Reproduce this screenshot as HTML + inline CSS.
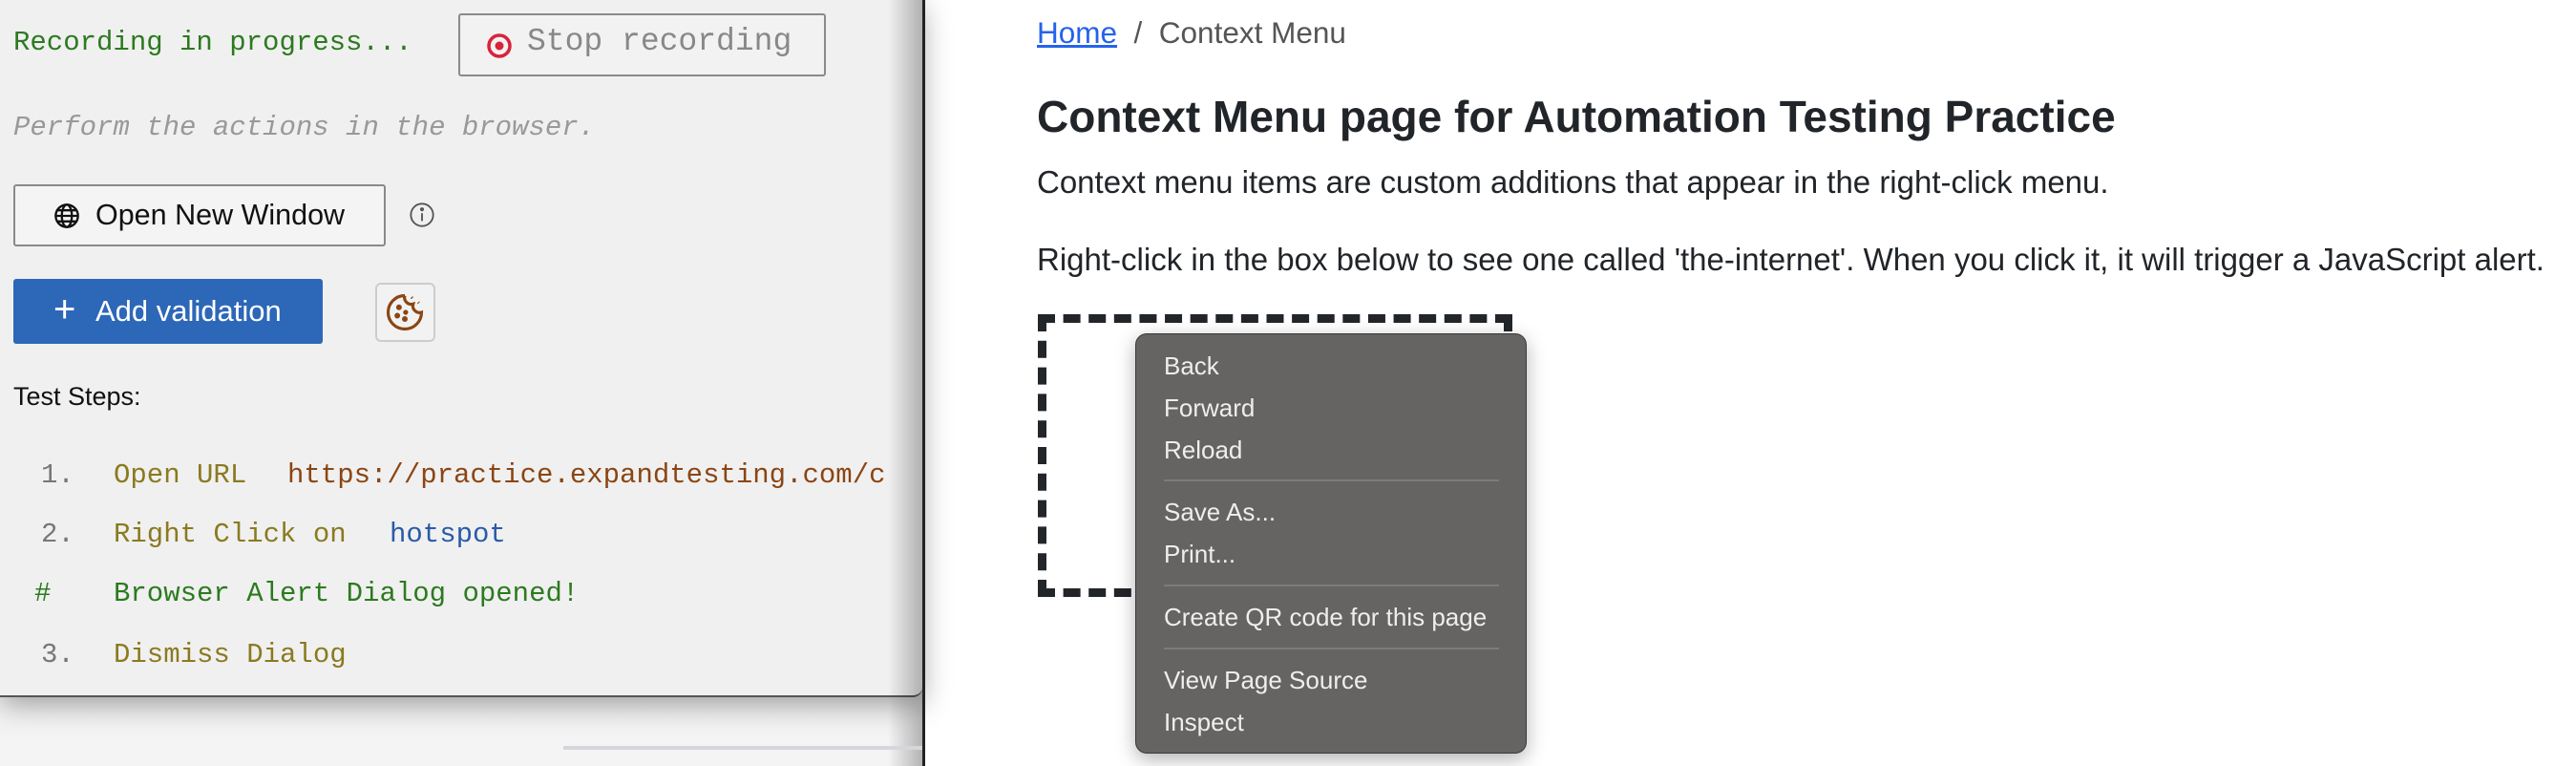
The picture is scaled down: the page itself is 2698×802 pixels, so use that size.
<!DOCTYPE html>
<html><head><meta charset="utf-8"><style>
*{margin:0;padding:0;box-sizing:border-box}
body{width:2698px;height:802px;overflow:hidden;background:#fff;position:relative;font-family:"Liberation Sans",sans-serif}
.abs{position:absolute;white-space:nowrap}
.left{position:absolute;left:0;top:0;width:968px;height:802px;background:linear-gradient(#e8e8e8,#f4f4f4)}
.panel{position:absolute;left:0;top:0;width:966px;height:730px;background:#f0f0f0;border-bottom:2px solid #555;border-bottom-right-radius:10px;box-shadow:0 8px 30px rgba(0,0,0,.35)}
.edge{position:absolute;left:930px;top:0;width:38px;height:802px;background:linear-gradient(90deg,rgba(0,0,0,0),rgba(0,0,0,.28));}
.vline{position:absolute;left:966px;top:0;width:3px;height:802px;background:#222}
.mono{font-family:"Liberation Mono",monospace;font-size:29px}
.btn{position:absolute;border:2px solid #8a8a8a;background:#f2f2f2}
.menu .it{position:absolute;left:29px;color:#eeeeee;font-size:26px}
.sep{position:absolute;left:29px;width:351px;height:2px;background:#7d7c7a}
</style></head><body>
<div class="left"></div>
<div class="panel">
 <div class="abs mono" style="left:14px;top:28px;color:#2c7a1f">Recording in progress...</div>
 <div class="btn" style="left:480px;top:14px;width:385px;height:66px;border-radius:3px"></div>
 <svg class="abs" style="left:508px;top:33px" width="30" height="30" viewBox="0 0 30 30"><circle cx="15" cy="15" r="11" fill="none" stroke="#d9233a" stroke-width="3.5"/><circle cx="15" cy="15" r="4.5" fill="#d9233a"/></svg>
 <div class="abs mono" style="left:552px;top:25px;color:#888;font-size:33px">Stop recording</div>
 <div class="abs mono" style="left:14px;top:117px;color:#999;font-style:italic;font-size:29px">Perform the actions in the browser.</div>
 <div class="btn" style="left:14px;top:193px;width:390px;height:65px;border-radius:3px;background:#f4f4f4"></div>
 <svg class="abs" style="left:56px;top:212px" width="28" height="28" viewBox="0 0 24 24" fill="none" stroke="#111" stroke-width="2"><circle cx="12" cy="12" r="10"/><ellipse cx="12" cy="12" rx="4.5" ry="10"/><path d="M2 12h20M4 7h16M4 17h16"/></svg>
 <div class="abs" style="left:100px;top:208px;font-size:30.5px;color:#111">Open New Window</div>
 <svg class="abs" style="left:428px;top:211px" width="28" height="28" viewBox="0 0 24 24" fill="none" stroke="#555" stroke-width="1.6"><circle cx="12" cy="12" r="10"/><path d="M12 10.5v7"/><circle cx="12" cy="7" r="1" fill="#555"/></svg>
 <div class="abs" style="left:14px;top:292px;width:324px;height:68px;background:#2d67b8;border-radius:3px"></div>
 <div class="abs" style="left:56px;top:302px;font-size:40px;color:#fff;font-weight:300">+</div>
 <div class="abs" style="left:100px;top:308px;font-size:31px;color:#fff">Add validation</div>
 <div class="abs" style="left:393px;top:296px;width:63px;height:62px;border:2px solid #ccc;border-radius:6px;background:#f2f2f2"></div>
 <svg class="abs" style="left:403px;top:306px" width="42" height="42" viewBox="0 0 24 24" fill="none" stroke="#8b4513" stroke-width="1.8"><path d="M12 2a10 10 0 1 0 10 10 4 4 0 0 1-5-5 4 4 0 0 1-5-5"/><circle cx="8.5" cy="9" r=".8" fill="#8b4513"/><circle cx="7.5" cy="14" r=".8" fill="#8b4513"/><circle cx="12" cy="16" r=".8" fill="#8b4513"/><circle cx="12.5" cy="12" r=".6" fill="#8b4513"/><path d="M16 3l.5.5M20 6l.4.4"/></svg>
 <div class="abs" style="left:14px;top:400px;font-size:27px;color:#111">Test Steps:</div>
 <div class="abs mono" style="left:43px;top:481px;color:#777">1.</div>
 <div class="abs mono" style="left:119px;top:481px;color:#8a7a20">Open URL</div>
 <div class="abs mono" style="left:301px;top:481px;color:#8b4513">https://practice.expandtesting.com/c</div>
 <div class="abs mono" style="left:43px;top:543px;color:#777">2.</div>
 <div class="abs mono" style="left:119px;top:543px;color:#8a7a20">Right Click on</div>
 <div class="abs mono" style="left:408px;top:543px;color:#2a5aa8">hotspot</div>
 <div class="abs mono" style="left:36px;top:605px;color:#2c7a1f">#</div>
 <div class="abs mono" style="left:119px;top:605px;color:#2c7a1f">Browser Alert Dialog opened!</div>
 <div class="abs mono" style="left:43px;top:669px;color:#777">3.</div>
 <div class="abs mono" style="left:119px;top:669px;color:#8a7a20">Dismiss Dialog</div>
</div>
<div class="edge"></div>
<div class="abs" style="left:590px;top:781px;width:376px;height:4px;background:#d4d6da"></div>
<div class="vline"></div>

<div class="abs" style="left:1086px;top:16px;font-size:31.5px;color:#555"><span style="color:#2563eb;text-decoration:underline">Home</span>&nbsp; / &nbsp;Context Menu</div>
<div class="abs" style="left:1086px;top:95px;font-size:46px;color:#212529;font-weight:bold">Context Menu page for Automation Testing Practice</div>
<div class="abs" style="left:1086px;top:172px;font-size:33px;color:#212529">Context menu items are custom additions that appear in the right-click menu.</div>
<div class="abs" style="left:1086px;top:253px;font-size:33px;color:#212529">Right-click in the box below to see one called 'the-internet'. When you click it, it will trigger a JavaScript alert.</div>
<div class="abs" style="left:1087px;top:329px;width:497px;height:296px;border:9px dashed #222529"></div>
<div class="menu abs" style="left:1189px;top:349px;width:410px;height:440px;background:#656462;border:1px solid #3a3a3a;border-radius:12px;box-shadow:0 6px 20px rgba(0,0,0,.3)">
 <div class="it" style="top:18px">Back</div>
 <div class="it" style="top:62px">Forward</div>
 <div class="it" style="top:106px">Reload</div>
 <div class="sep" style="top:152px"></div>
 <div class="it" style="top:171px">Save As...</div>
 <div class="it" style="top:215px">Print...</div>
 <div class="sep" style="top:262px"></div>
 <div class="it" style="top:281px">Create QR code for this page</div>
 <div class="sep" style="top:328px"></div>
 <div class="it" style="top:347px">View Page Source</div>
 <div class="it" style="top:391px">Inspect</div>
</div>
</body></html>
